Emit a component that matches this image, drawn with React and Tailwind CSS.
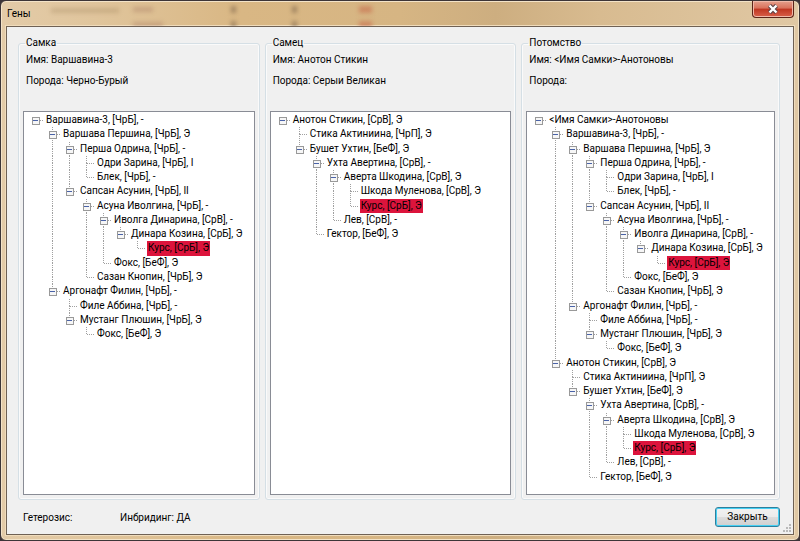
import React from 'react';
import { clsx } from 'clsx';

const FEMALE = [
  [0, 'Варшавина-3, [ЧрБ], -'],
  [1, 'Варшава Першина, [ЧрБ], Э'],
  [2, 'Перша Одрина, [ЧрБ], -'],
  [3, 'Одри Зарина, [ЧрБ], I'],
  [3, 'Блек, [ЧрБ], -'],
  [2, 'Сапсан Асунин, [ЧрБ], II'],
  [3, 'Асуна Иволгина, [ЧрБ], -'],
  [4, 'Иволга Динарина, [СрВ], -'],
  [5, 'Динара Козина, [СрБ], Э'],
  [6, 'Курс, [СрБ], Э', true],
  [4, 'Фокс, [БеФ], Э'],
  [3, 'Сазан Кнопин, [ЧрБ], Э'],
  [1, 'Аргонафт Филин, [ЧрБ], -'],
  [2, 'Филе Аббина, [ЧрБ], -'],
  [2, 'Мустанг Плюшин, [ЧрБ], Э'],
  [3, 'Фокс, [БеФ], Э'],
];

const MALE = [
  [0, 'Анотон Стикин, [СрВ], Э'],
  [1, 'Стика Актиниина, [ЧрП], Э'],
  [1, 'Бушет Ухтин, [БеФ], Э'],
  [2, 'Ухта Авертина, [СрВ], -'],
  [3, 'Аверта Шкодина, [СрВ], Э'],
  [4, 'Шкода Муленова, [СрВ], Э'],
  [4, 'Курс, [СрБ], Э', true],
  [3, 'Лев, [СрВ], -'],
  [2, 'Гектор, [БеФ], Э'],
];

const nest = (rows) => rows.map(([depth, ...rest]) => [depth + 1, ...rest]);

const OFFSPRING = [[0, '<Имя Самки>-Анотоновы'], ...nest(FEMALE), ...nest(MALE)];

// True when the branch at `level` goes on below row `index`.
function continues(rows, index, level) {
  for (let i = index + 1; i < rows.length; i++) {
    if (rows[i][0] < level) return false;
    if (rows[i][0] === level) return true;
  }
  return false;
}

function Guide({ up, down, node, expandable }) {
  return (
    <svg className="h-0 min-h-full w-[17px] shrink-0" shapeRendering="crispEdges" aria-hidden="true">
      <g stroke="#a0a0a0" strokeDasharray="1 1">
        {up && <line x1="7.5" x2="7.5" y1="0" y2="50%" />}
        {down && <line x1="7.5" x2="7.5" y1="50%" y2="100%" />}
      </g>
      {node && (
        <svg y="50%" overflow="visible">
          <line x1="8" x2="16" y1="0.5" y2="0.5" stroke="#a0a0a0" strokeDasharray="1 1" />
          {expandable && (
            <>
              <rect x="4" y="-3" width="7" height="7" fill="#f6f6f6" stroke="#999999" />
              <line x1="5" x2="10" y1="0.5" y2="0.5" stroke="#4a63a8" />
            </>
          )}
        </svg>
      )}
    </svg>
  );
}

function Tree({ rows, label }) {
  return (
    <ul
      role="tree"
      aria-label={label}
      className="grid flex-1 grid-rows-[repeat(26,minmax(14px,1fr))] border border-[#898c95] bg-white pt-px pb-2.5 pl-1"
    >
      {rows.map(([depth, text, marked], index) => {
        const expandable = index + 1 < rows.length && rows[index + 1][0] > depth;
        return (
          <li
            key={index}
            role="treeitem"
            aria-level={depth + 1}
            className="flex min-h-0 items-stretch whitespace-nowrap"
          >
            {Array.from({ length: depth + 1 }, (_, level) => {
              const more = level > 0 && continues(rows, index, level);
              const own = level === depth;
              return (
                <Guide
                  key={level}
                  node={own}
                  expandable={own && expandable}
                  up={own ? level > 0 : more}
                  down={more}
                />
              );
            })}
            <span className={clsx('px-px leading-[14px]', marked && 'bg-[#dc143c]')}>{text}</span>
          </li>
        );
      })}
    </ul>
  );
}

function Panel({ title, name, breed, rows }) {
  return (
    <fieldset className="flex min-w-0 flex-col rounded-[3px] border border-[#d5dfe5] px-1 pb-1 shadow-[inset_0_0_0_1px_#fafafa]">
      <legend className="ml-0.5 px-px leading-[14px]">{title}</legend>
      <div className="flex h-[61px] flex-col gap-[7px] pl-[3px] pt-[3px] leading-[14px]">
        <p>Имя: {name}</p>
        <p>Порода: {breed}</p>
      </div>
      <Tree rows={rows} label={title} />
    </fieldset>
  );
}

function Smudge({ className }) {
  return <span aria-hidden="true" className={clsx('absolute blur-[2px]', className)} />;
}

export default function App() {
  return (
    <div className="flex min-h-screen bg-[#3c3438] font-[Roboto,'Liberation_Sans',sans-serif] text-[10px] text-black">
      <div className="flex flex-1 flex-col rounded-[6px] border border-[#3d3537] bg-[linear-gradient(90deg,#e3cba8_0%,#e0c59c_12%,#d9b784_30%,#d6b583_50%,#cdae80_62%,#d8bb90_75%,#e0c8a4_100%)] px-[5px] pb-[5px] shadow-[inset_0_0_0_1px_#f3e3c8]">
        <header className="relative flex h-[25px] items-start justify-between overflow-hidden">
          <Smudge className="left-[45px] top-[7px] h-[5px] w-[68px] bg-[#8b6a45]/25" />
          <Smudge className="left-[127px] top-[6px] h-[5px] w-[20px] bg-[#95604f]/30" />
          <Smudge className="left-[127px] top-[21px] h-[5px] w-[30px] bg-[#95604f]/30" />
          <Smudge className="left-[225px] top-[5px] h-[7px] w-[5px] bg-[#5f4a35]/45" />
          <Smudge className="left-[225px] top-[20px] h-[7px] w-[5px] bg-[#5f4a35]/45" />
          <Smudge className="left-[286px] top-[5px] h-[7px] w-[5px] bg-[#5f4a35]/45" />
          <Smudge className="left-[286px] top-[20px] h-[7px] w-[5px] bg-[#5f4a35]/45" />
          <Smudge className="left-[353px] top-[5px] h-[7px] w-[13px] bg-[#c04a32]/40" />
          <Smudge className="left-[353px] top-[20px] h-[7px] w-[13px] bg-[#c04a32]/40" />
          <h1 className="relative px-px pt-[6px] leading-[14px]">Гены</h1>
          <button
            type="button"
            aria-label="Закрыть окно"
            className="flex h-[17px] w-[42px] items-center justify-center rounded-b-[4px] border border-t-0 border-[#5c2418] bg-[linear-gradient(#e5a08c_0%,#d9705a_45%,#bf3520_50%,#d9604a_100%)] shadow-[inset_0_0_0_1px_#f0b8a8]"
          >
            <svg width="12" height="10" viewBox="0 0 12 10" aria-hidden="true">
              <path d="M2.5 1.5 9.5 8.5M9.5 1.5 2.5 8.5" stroke="#5a4448" strokeWidth="4.4" />
              <path d="M2.5 1.5 9.5 8.5M9.5 1.5 2.5 8.5" stroke="#ffffff" strokeWidth="2.4" />
            </svg>
          </button>
        </header>
        <main className="flex flex-1 flex-col border border-[#6f6154] bg-[#f0f0f0] pl-[11px] pr-[13px] pt-[9px] shadow-[0_0_0_1px_#f0dcbc]">
          <div className="grid flex-1 grid-cols-[241fr_251fr_258fr] gap-[5px]">
            <Panel title="Самка" name="Варшавина-3" breed="Черно-Бурый" rows={FEMALE} />
            <Panel title="Самец" name="Анотон Стикин" breed="Серыи Великан" rows={MALE} />
            <Panel title="Потомство" name="<Имя Самки>-Анотоновы" breed="" rows={OFFSPRING} />
          </div>
          <footer className="relative flex h-[34px] items-center pl-[5px]">
            <p className="w-[97px]">Гетерозис:</p>
            <p>Инбридинг: ДА</p>
            <button
              type="button"
              className="ml-auto h-5 w-[65px] rounded-[3px] border border-[#2f7f9c] bg-[linear-gradient(#f2f2f2_0%,#ebebeb_50%,#dddddd_50%,#cfcfcf_100%)] leading-[14px] shadow-[inset_0_0_0_1px_#46d0f4]"
            >
              Закрыть
            </button>
            <svg
              className="absolute -right-3 bottom-px"
              width="9"
              height="9"
              viewBox="0 0 9 9"
              fill="#b9b9b9"
              aria-hidden="true"
            >
              <path d="M6 0h2v2H6zM3 3h2v2H3zM6 3h2v2H6zM0 6h2v2H0zM3 6h2v2H3zM6 6h2v2H6z" />
            </svg>
          </footer>
        </main>
      </div>
    </div>
  );
}
